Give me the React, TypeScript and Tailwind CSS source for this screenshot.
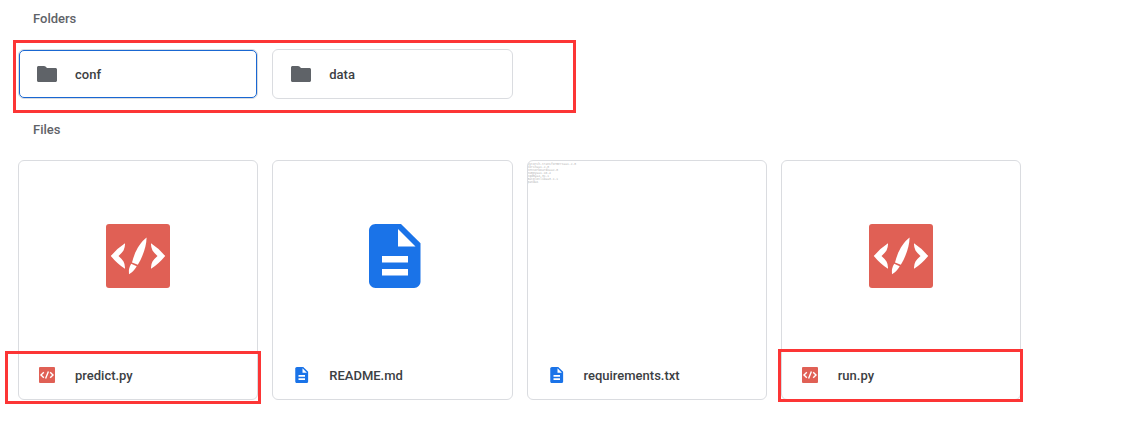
import type { ReactNode } from "react";

type FileKind = "code" | "doc" | "text";

interface FileItem {
  name: string;
  kind: FileKind;
  mark?: string;
}

const folders = [
  { name: "conf", selected: true },
  { name: "data", selected: false },
];

const files: FileItem[] = [
  { name: "predict.py", kind: "code", mark: "-left-[13px] -right-[3px] top-[191px] h-[53px]" },
  { name: "README.md", kind: "doc" },
  { name: "requirements.txt", kind: "text" },
  { name: "run.py", kind: "code", mark: "-left-[3px] -right-[2px] top-[189px] h-[53px]" },
];

const requirements = [
  "pytorch-transformers==1.2.0",
  "torch==1.2.0",
  "tensorboardX==2.0",
  "numpy==1.16.4",
  "tqdm==4.31.1",
  "matplotlib==3.1.1",
  "pandas",
];

function FolderIcon() {
  return (
    <svg viewBox="0 0 20 16" className="h-4 w-5 shrink-0" aria-hidden="true">
      <path
        fill="#5f6368"
        d="M7 0H1.500C.7 0 0 .7 0 1.500v13c0 .8.7 1.500 1.500 1.500h17c.8 0 1.500-.7 1.500-1.500V3.500c0-.8-.7-1.500-1.500-1.500H10L8.500.5C8.100.2 7.600 0 7 0z"
      />
    </svg>
  );
}

function CodeIcon({ className }: { className: string }) {
  return (
    <svg viewBox="0 0 64 64" className={className} aria-hidden="true">
      <rect width="64" height="64" rx="3" fill="#e06055" />
      <g fill="#fff">
        <path d="M19 19.200Q11.500 24 4.800 31.900Q11.500 40 19 44.700Q19.200 40.500 17.500 37.500Q15.500 34.500 12.500 31.900Q15.500 29.500 17.500 26.500Q19.200 23.500 19 19.200Z" />
        <path d="M45 19.200Q52.500 24 59.200 31.900Q52.500 40 45 44.700Q44.800 40.500 46.500 37.500Q48.500 34.500 51.500 31.900Q48.500 29.500 46.500 26.500Q44.800 23.500 45 19.200Z" />
        <path d="M40.600 13.600C33.500 19 28.600 28 26 38.500L31.800 40.800C36.600 33 40.600 22 40.600 13.600Z" />
        <path d="M25.200 39.800L30.700 42.200Q28.500 46.700 23 50.200Q22.200 44.500 25.200 39.800Z" />
      </g>
    </svg>
  );
}

function SmallCodeIcon() {
  return (
    <svg viewBox="0 0 16 16" className="size-4" aria-hidden="true">
      <rect width="16" height="16" rx="1" fill="#e06055" />
      <path
        d="M4.800 5.300L2 8l2.800 2.700M11.200 5.300L14 8l-2.800 2.700M9.400 4.500L6.600 11.500"
        fill="none"
        stroke="#fff"
        strokeWidth="1.400"
      />
    </svg>
  );
}

function DocIcon({ className }: { className: string }) {
  return (
    <svg viewBox="-9 0 64 64" className={className} aria-hidden="true">
      <path
        fill="#1a73e8"
        d="M6.400 0H32L51.500 19.200V57.600C51.500 61.100 48.600 64 45.100 64H6.400C2.900 64 0 61.100 0 57.600V6.400C0 2.900 2.900 0 6.400 0Z"
      />
      <path fill="#fff" d="M29 5V22.500H46.500ZM13 32H39V38.500H13ZM13 45H39V51.500H13Z" />
    </svg>
  );
}

function Preview({ kind }: { kind: FileKind }) {
  if (kind === "text") {
    return (
      <span className="block h-full w-full pt-0.5 font-['Liberation_Mono',monospace] text-[3px] leading-[3px] font-normal text-[#b4b4b4]">
        {requirements.map((line) => (
          <span key={line} className="block">
            {line}
          </span>
        ))}
      </span>
    );
  }
  return kind === "code" ? <CodeIcon className="size-16" /> : <DocIcon className="size-16" />;
}

function Mark({ className }: { className: string }) {
  return <div className={`pointer-events-none absolute border-3 border-[#fc3535] ${className}`} />;
}

function Heading({ children }: { children: ReactNode }) {
  return <h2 className="pl-[15px] text-[13px] leading-5 font-medium text-[#5f6368]">{children}</h2>;
}

export default function App() {
  return (
    <main className="bg-white pt-[9px] pr-[111px] pb-9 pl-[18px] font-['Roboto',sans-serif] text-[13px] font-medium text-[#3c4043]">
      <section>
        <Heading>Folders</Heading>
        <div className="relative mt-5">
          <ul className="grid grid-cols-4 gap-[14px]">
            {folders.map((folder) => (
              <li key={folder.name} className="rounded-md border border-[#dadce0]">
                <button
                  type="button"
                  className={`flex h-12 w-full items-center gap-[18px] rounded-[5px] border pl-[17px] text-left ${
                    folder.selected ? "border-[#1967d2]" : "border-transparent"
                  }`}
                >
                  <FolderIcon />
                  <span className="pt-0.5">{folder.name}</span>
                </button>
              </li>
            ))}
          </ul>
          <Mark className="-top-[9px] -left-[5px] h-[73px] w-[563px]" />
        </div>
      </section>
      <section className="mt-[21px]">
        <Heading>Files</Heading>
        <ul className="mt-5 grid grid-cols-4 gap-[14px]">
          {files.map((file) => (
            <li key={file.name} className="relative">
              <button
                type="button"
                className="flex h-60 w-full flex-col overflow-hidden rounded-md border border-[#dadce0] text-left"
              >
                <span className="flex h-[190px] w-full items-center justify-center">
                  <Preview kind={file.kind} />
                </span>
                <span className="flex h-12 items-center gap-[18px] pl-[18px]">
                  <span className="flex w-5 justify-center">
                    {file.kind === "code" ? <SmallCodeIcon /> : <DocIcon className="size-4" />}
                  </span>
                  <span className="pt-0.5">{file.name}</span>
                </span>
              </button>
              {file.mark && <Mark className={file.mark} />}
            </li>
          ))}
        </ul>
      </section>
    </main>
  );
}
